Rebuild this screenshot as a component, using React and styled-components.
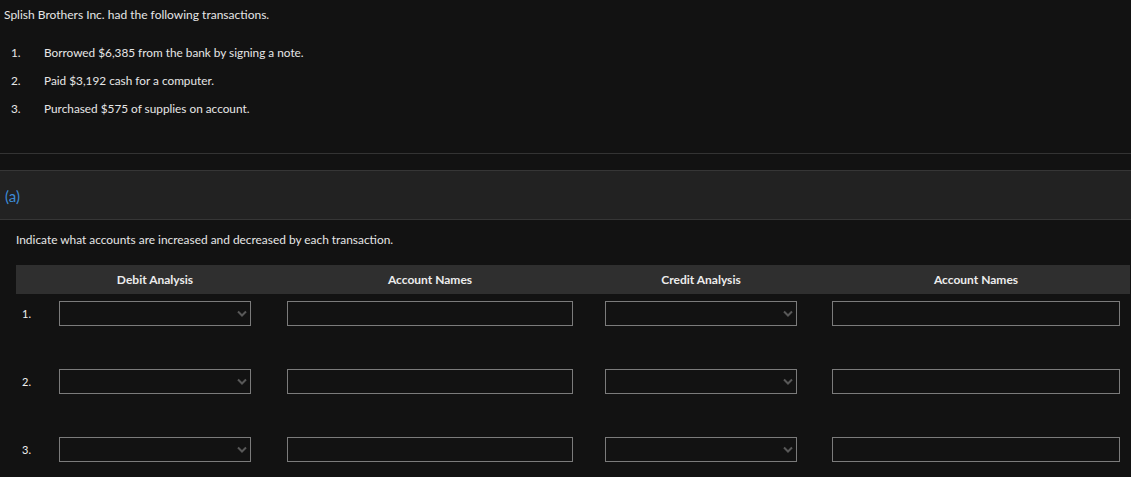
import React from "react";
import styled, { createGlobalStyle } from "styled-components";

const GlobalStyle = createGlobalStyle`
  html, body {
    margin: 0;
    padding: 0;
    background: #121212;
  }
  body {
    font-family: Lato, "Open Sans", "Liberation Sans", sans-serif;
    color: #e6e6e6;
    font-size: 12px;
  }
`;

const COLS = "43px 192px 36px 286px 32px 192px 35px 288px 10px";

const Page = styled.div`
  width: 1131px;
  min-height: 477px;
  background: #121212;
  overflow: hidden;
`;

const Intro = styled.div`
  padding: 6px 4px 0;
  line-height: 18px;
`;

const TxList = styled.ol`
  list-style: none;
  margin: 15px 0 0;
  padding: 0;
`;

const TxItem = styled.li`
  display: grid;
  grid-template-columns: 33px 1fr;
  padding-left: 11px;
  height: 28px;
  line-height: 28px;
  font-size: 11.8px;
`;

const Rule = styled.div`
  height: 1px;
  background: #333;
  margin-top: 30px;
`;

const PartHeader = styled.div`
  margin-top: 16px;
  height: 48px;
  display: flex;
  align-items: center;
  padding-left: 5px;
  background: #222;
  border-top: 1px solid #363636;
  border-bottom: 1px solid #363636;
`;

const PartLabel = styled.span`
  color: #3d8ad4;
  font-size: 15px;
  padding-top: 2px;
`;

const Prompt = styled.div`
  margin: 11px 0 0 16px;
  line-height: 18px;
  font-size: 11.9px;
`;

const Table = styled.div`
  margin: 16px 1px 0 16px;
`;

const HeadRow = styled.div`
  display: grid;
  grid-template-columns: ${COLS};
  background: #2f2f2f;
  height: 29px;
  align-items: center;
`;

const HeadCell = styled.div`
  grid-column: ${(p) => p.$col};
  text-align: center;
  font-weight: 700;
  color: #ececec;
  font-size: 12px;
`;

const Row = styled.div`
  display: grid;
  grid-template-columns: ${COLS};
  margin-top: ${(p) => (p.$first ? 7 : 43)}px;
  height: 25px;
  align-items: center;
`;

const Num = styled.div`
  grid-column: 1;
  padding-left: 6px;
  color: #f0f0f0;
  font-size: 11px;
`;

const SelectWrap = styled.div`
  grid-column: ${(p) => p.$col};
  position: relative;
  height: 25px;
`;

const Select = styled.select`
  appearance: none;
  box-sizing: border-box;
  width: 100%;
  height: 25px;
  margin: 0;
  background: #121212;
  border: 1px solid #7b7b7b;
  border-radius: 0;
  color: #e6e6e6;
`;

const Chevron = styled.svg`
  position: absolute;
  right: 4px;
  top: 9px;
  pointer-events: none;
`;

const TextBox = styled.input`
  grid-column: ${(p) => p.$col};
  box-sizing: border-box;
  width: 100%;
  height: 25px;
  margin: 0;
  background: #121212;
  border: 1px solid #7b7b7b;
  border-radius: 0;
  color: #e6e6e6;
`;

const DropDown = ({ col }) => (
  <SelectWrap $col={col}>
    <Select defaultValue="">
      <option value=""></option>
    </Select>
    <Chevron width="10" height="7" viewBox="0 0 10 7">
      <path d="M1 1.5 L5 5.5 L9 1.5" fill="none" stroke="#585858" strokeWidth="2" />
    </Chevron>
  </SelectWrap>
);

const transactions = [
  "Borrowed $6,385 from the bank by signing a note.",
  "Paid $3,192 cash for a computer.",
  "Purchased $575 of supplies on account.",
];

export default function App() {
  return (
    <Page>
      <GlobalStyle />
      <Intro>Splish Brothers Inc. had the following transactions.</Intro>
      <TxList>
        {transactions.map((t, i) => (
          <TxItem key={i}>
            <span>{i + 1}.</span>
            <span>{t}</span>
          </TxItem>
        ))}
      </TxList>
      <Rule />
      <PartHeader>
        <PartLabel>(a)</PartLabel>
      </PartHeader>
      <Prompt>Indicate what accounts are increased and decreased by each transaction.</Prompt>
      <Table>
        <HeadRow>
          <HeadCell $col={2}>Debit Analysis</HeadCell>
          <HeadCell $col={4}>Account Names</HeadCell>
          <HeadCell $col={6}>Credit Analysis</HeadCell>
          <HeadCell $col={8}>Account Names</HeadCell>
        </HeadRow>
        {[1, 2, 3].map((n) => (
          <Row key={n} $first={n === 1}>
            <Num>{n}.</Num>
            <DropDown col={2} />
            <TextBox $col={4} type="text" />
            <DropDown col={6} />
            <TextBox $col={8} type="text" />
          </Row>
        ))}
      </Table>
    </Page>
  );
}
